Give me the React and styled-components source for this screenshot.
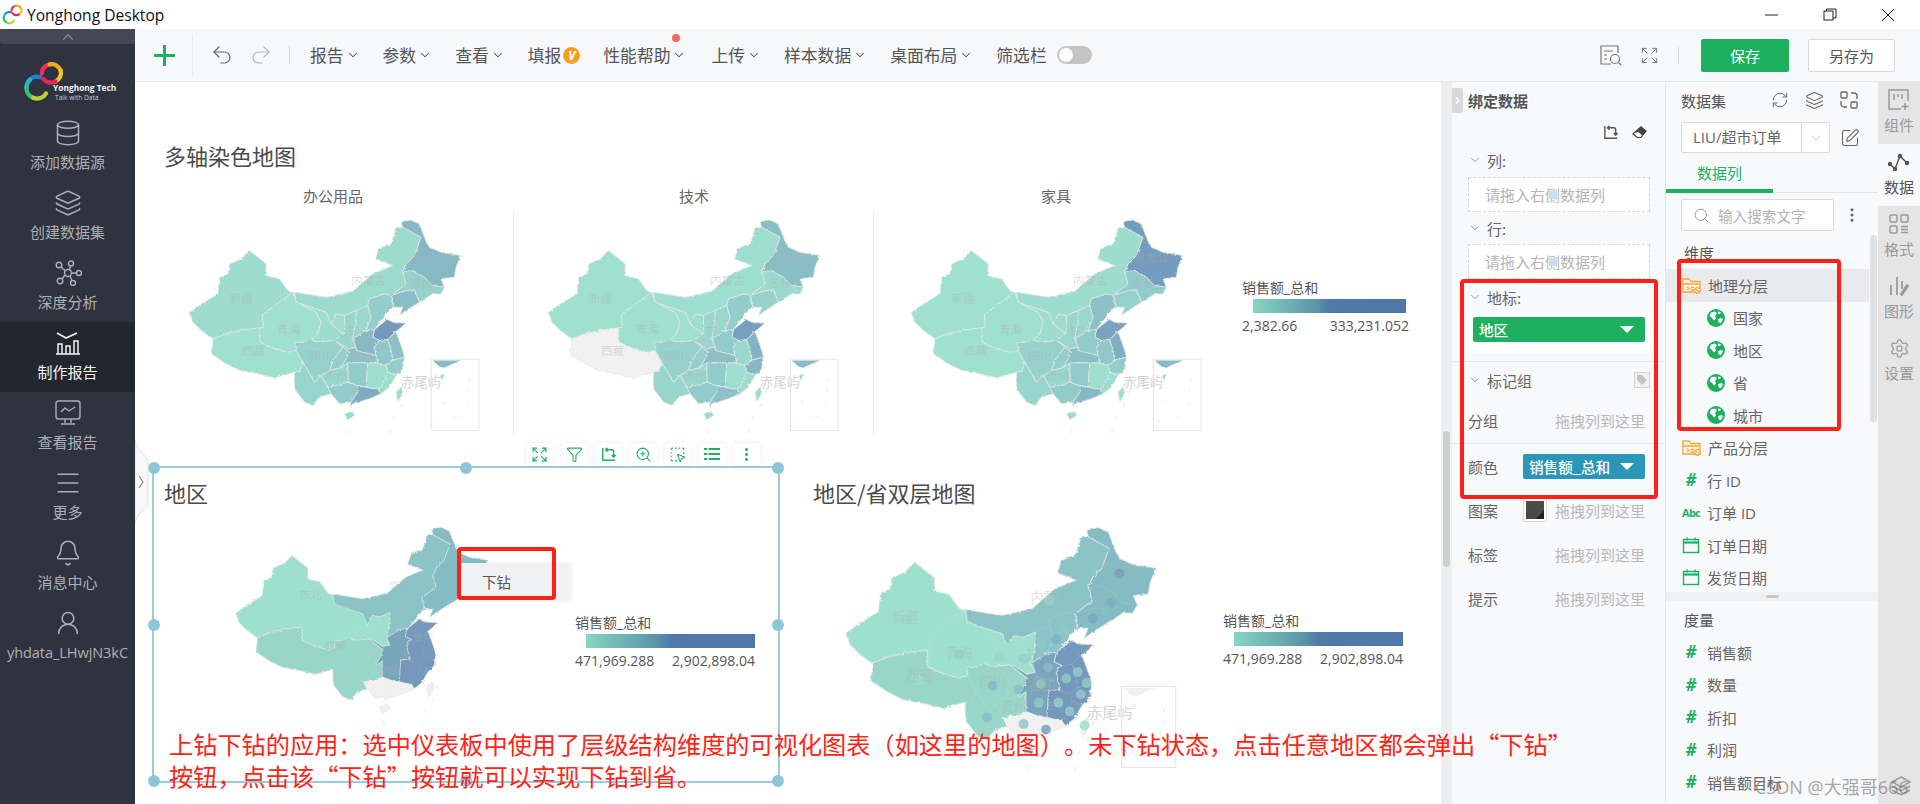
import React from "react";
import styled, { createGlobalStyle } from "styled-components";
import {
  Undo2, Redo2, ChevronDown, ChevronRight, ChevronUp, Expand, Funnel, ZoomIn, SquareDashedMousePointer,
  EllipsisVertical, RefreshCw, SquarePen, Search, Settings, Database, Layers, Menu, Bell, UserRound,
} from "lucide-react";

const CJK = `"Noto Sans CJK SC", "Open Sans", sans-serif`;
const GREEN = "#1cb05f";

const GlobalStyle = createGlobalStyle`
  html, body { margin: 0; padding: 0; background: #fff; }
  * { box-sizing: border-box; }
  #root { font-family: ${CJK}; }
`;

const Page = styled.div`
  position: relative;
  width: 1920px;
  height: 804px;
  overflow: hidden;
  display: flex;
  flex-direction: column;
`;

/* ---------- title bar ---------- */
const TitleBar = styled.div`
  height: 29px;
  flex: none;
  display: flex;
  align-items: center;
  background: #fff;
  padding-left: 2px;
`;
const AppName = styled.span`
  margin-left: 4px;
  font: 15.6px "Open Sans", sans-serif;
  color: #111;
`;
const WinButtons = styled.div`
  margin-left: auto;
  display: flex;
  align-items: center;
  gap: 44px;
  padding-right: 25px;
`;
const Body = styled.div`
  flex: 1;
  min-height: 0;
  display: flex;
`;

/* ---------- sidebar ---------- */
const Sidebar = styled.nav`
  width: 135px;
  flex: none;
  background: #2f3340;
  display: flex;
  flex-direction: column;
`;
const CollapseBar = styled.div`
  height: 15px;
  background: #454854;
  border-radius: 0 0 3px 3px;
  display: flex;
  justify-content: center;
  align-items: center;
  color: #8b8d96;
`;
const LogoBlock = styled.div`
  height: 68px;
  display: flex;
`;
const LogoText = styled.div`
  margin: 39px 0 0 -11px;
  color: #f1f1f3;
  font: 700 8.4px/10px "Open Sans", sans-serif;
  white-space: nowrap;
  small { display: block; font: 400 6.6px/9px "Open Sans", sans-serif; color: #c9cad0; margin-left: 2px; }
`;
const NavItem = styled.div`
  height: 70px;
  flex: none;
  display: flex;
  flex-direction: column;
  align-items: center;
  padding-top: 8px;
  background: ${(p) => (p.$active ? "#23252f" : "transparent")};
  color: ${(p) => (p.$active ? "#f4f4f5" : "#adafb5")};
`;
const NavIcon = styled.div`
  height: 26px;
  display: flex;
  align-items: center;
`;
const NavLabel = styled.div`
  margin-top: 6px;
  font-size: ${(p) => (p.$latin ? 14.6 : 15)}px;
  line-height: 20px;
  white-space: nowrap;
  font-family: "Open Sans", ${CJK};
  letter-spacing: ${(p) => (p.$latin ? "-0.1px" : "0")};
`;

/* ---------- toolbar ---------- */
const Column = styled.div`
  flex: 1;
  min-width: 0;
  display: flex;
  flex-direction: column;
`;
const Toolbar = styled.div`
  height: 53px;
  flex: none;
  display: flex;
  align-items: center;
  background: #f7f8fa;
  border-bottom: 1px solid #e6e8ec;
  color: #555;
`;
const PlusCell = styled.div`
  width: 58px;
  height: 43px;
  display: flex;
  align-items: center;
  padding-left: 19px;
  border-right: 1px solid #e9ebee;
`;
const HistoryGroup = styled.div`
  display: flex;
  align-items: center;
  gap: 15px;
  padding-left: 17px;
  width: 97px;
  height: 18px;
  border-right: 1px solid #d9dbde;
`;
const MenuBar = styled.div`
  display: flex;
  align-items: center;
  gap: 23px;
  margin-left: 20px;
`;
const MenuEntry = styled.div`
  position: relative;
  display: flex;
  align-items: center;
  gap: 2px;
  margin-right: ${(p) => p.$after || 0}px;
  font-size: 16.8px;
  line-height: 24px;
  white-space: nowrap;
`;
const RedDot = styled.span`
  position: absolute;
  top: -9px;
  right: 6px;
  width: 8px;
  height: 8px;
  border-radius: 50%;
  background: #ee6a5f;
`;
const VBadge = styled.span`
  width: 17px;
  height: 17px;
  border-radius: 50%;
  background: #f5a11f;
  color: #fff;
  font: italic 700 12px/17px "Open Sans", sans-serif;
  text-align: center;
`;
const Toggle = styled.span`
  position: relative;
  width: 35px;
  height: 18px;
  margin-left: 8px;
  border-radius: 9px;
  background: #c4c4c4;
  &::after {
    content: "";
    position: absolute;
    left: 2px;
    top: 2px;
    width: 14px;
    height: 14px;
    border-radius: 50%;
    background: #fff;
  }
`;
const ToolbarEnd = styled.div`
  margin-left: auto;
  display: flex;
  align-items: center;
  padding-right: 25px;
  svg + svg { margin-left: 18px; }
`;
const EndDivider = styled.span`
  width: 1px;
  height: 17px;
  margin: 0 22px 0 19px;
  background: #d9dbde;
`;
const SaveButton = styled.div`
  width: 88px;
  height: 33px;
  border-radius: 2px;
  background: ${GREEN};
  color: #fff;
  font-size: 15px;
  line-height: 33px;
  text-align: center;
`;
const SaveAsButton = styled.div`
  width: 87px;
  height: 33px;
  margin-left: 19px;
  border: 1px solid #d8dade;
  border-radius: 2px;
  background: #fff;
  color: #555;
  font-size: 15px;
  line-height: 31px;
  text-align: center;
`;

/* ---------- canvas ---------- */
const Workspace = styled.div`
  flex: 1;
  min-height: 0;
  display: flex;
`;
const Canvas = styled.main`
  position: relative;
  width: 1306px;
  flex: none;
  background: #fff;
  overflow: hidden;
  padding: 59px 0 0 17px;
`;
const WidgetTitle = styled.h2`
  margin: 0;
  padding-left: ${(p) => p.$indent || 0}px;
  font-size: 22px;
  font-weight: 400;
  line-height: 28px;
  color: #4a4a4a;
  white-space: nowrap;
`;
const MapRow = styled.div`
  display: flex;
  margin-top: 16px;
`;
const MapCell = styled.div`
  width: ${(p) => p.$w}px;
  flex: none;
`;
const CellTitle = styled.div`
  height: 22px;
  font-size: 15px;
  line-height: 22px;
  text-align: center;
  color: #666;
`;
const CellBody = styled.div`
  height: 224px;
  margin-top: 4px;
  padding: 7px 0 0 ${(p) => p.$pad}px;
  border-right: ${(p) => (p.$divider ? "1px solid #eceded" : "none")};
`;
const MapSvg = styled.svg`
  display: block;
  flex: none;
  overflow: visible;
`;
const Legend = styled.div`
  width: ${(p) => p.$w}px;
  flex: none;
  margin: ${(p) => p.$top}px 0 0 ${(p) => p.$left}px;
  font-size: 14px;
  color: #555;
  font-family: "Open Sans", ${CJK};
`;
const LegendTitle = styled.div`
  line-height: 18px;
`;
const LegendBar = styled.div`
  height: 14px;
  margin: 2px ${(p) => p.$right || 0}px 2px 11px;
  background: linear-gradient(90deg, #86d6c2 0%, #5b93a8 42%, #4f79a8 50%, #4f77a8 100%);
`;
const LegendValues = styled.div`
  display: flex;
  justify-content: space-between;
  line-height: 22px;
`;
const BottomRow = styled.div`
  display: flex;
  margin-top: 31px;
`;
const SelectedWidget = styled.section`
  position: relative;
  width: 628px;
  height: 317px;
  flex: none;
  border: 2px solid #9accd9;
  padding: 10px 0 0 10px;
`;
const PlainWidget = styled.section`
  flex: 1;
  padding: 12px 0 0 33px;
`;
const WidgetBody = styled.div`
  display: flex;
  margin-top: ${(p) => p.$top}px;
  margin-left: ${(p) => p.$left}px;
`;
const Handle = styled.span`
  position: absolute;
  left: ${(p) => p.$x}%;
  top: ${(p) => p.$y}%;
  width: 12px;
  height: 12px;
  border-radius: 50%;
  background: #8ec6d8;
  transform: translate(-50%, -50%);
`;
const WidgetTools = styled.div`
  position: absolute;
  top: -25px;
  right: 18px;
  display: flex;
  gap: 7.5px;
`;
const ToolButton = styled.div`
  width: 27px;
  height: 22px;
  border-radius: 4px;
  background: #fff;
  box-shadow: 0 0 4px rgba(0, 0, 0, 0.08);
  color: ${GREEN};
  display: flex;
  align-items: center;
  justify-content: center;
`;
const DrillMenu = styled.div`
  position: absolute;
  left: 305px;
  top: 95px;
  width: 112px;
  height: 36px;
  padding-left: 23px;
  background: #f1f2f4;
  box-shadow: 0 1px 4px rgba(0, 0, 0, 0.1);
  color: #555;
  font-size: 14.5px;
  line-height: 38px;
`;
const CanvasNotch = styled.svg`
  position: absolute;
  left: 0;
  top: 358px;
`;

const ScrollStrip = styled.div`
  position: relative;
  width: 11px;
  flex: none;
  background: #eceef0;
`;
const ScrollThumb = styled.span`
  position: absolute;
  left: 2px;
  top: 349px;
  width: 7px;
  height: 136px;
  border-radius: 4px;
  background: #cfd0d0;
`;

/* ---------- binding panel ---------- */
const BindPanel = styled.aside`
  width: 213px;
  flex: none;
  background: #f8f9fb;
  color: #555;
  font-size: 15px;
`;
const BindHead = styled.div`
  height: 36px;
  display: flex;
  align-items: center;
  gap: 5px;
  font-weight: 700;
  color: #555;
`;
const CollapseTab = styled.span`
  width: 11px;
  height: 25px;
  margin-top: 1px;
  border-radius: 0 2px 2px 0;
  background: #d9d9d9;
  color: #fff;
  display: flex;
  align-items: center;
  justify-content: center;
`;
const BindIcons = styled.div`
  height: 28px;
  display: flex;
  align-items: center;
  justify-content: flex-end;
  gap: 13px;
  padding-right: 18px;
  color: #555;
`;
const SectionHead = styled.div`
  height: 28px;
  margin-top: ${(p) => p.$top || 0}px;
  display: flex;
  align-items: center;
  gap: 5px;
  padding: 0 15px 0 16px;
  color: #666;
  svg { color: #888; }
`;
const TagMark = styled.svg`
  margin-left: auto;
`;
const DropBox = styled.div`
  height: 35px;
  margin: ${(p) => p.$top}px 15px 0 16px;
  border: 1px dashed #d5d6d8;
  background: #fff;
  padding-left: 16px;
  line-height: 33px;
  color: #b5b5b5;
`;
const PillBox = styled.div`
  height: 41px;
  margin: 1px 15px 0 16px;
  padding: 5px;
  background: #fff;
`;
const FieldPill = styled.div`
  height: 25px;
  flex: ${(p) => (p.$grow ? "0 0 122px" : "none")};
  margin-left: ${(p) => (p.$grow ? "auto" : "0")};
  padding: 0 11px 0 6px;
  border-radius: 2px;
  background: ${(p) => p.$bg};
  color: #fff;
  display: flex;
  align-items: center;
  justify-content: space-between;
  font-size: 14.6px;
  font-weight: 500;
  white-space: nowrap;
`;
const Caret = styled.span`
  width: 0;
  height: 0;
  border-left: 7px solid transparent;
  border-right: 7px solid transparent;
  border-top: 7px solid #fff;
`;
const PanelRule = styled.div`
  height: 0;
  border-top: 1px solid #e6e7e9;
  margin-top: ${(p) => p.$top || 0}px;
`;
const FieldRow = styled.div`
  height: ${(p) => (p.$rule ? 46 : 44)}px;
  margin-top: ${(p) => (p.$rule ? 4 : 0)}px;
  display: flex;
  align-items: center;
  padding: 0 20px 0 16px;
  border-bottom: ${(p) => (p.$rule ? "1px solid #e6e7e9" : "none")};
  color: #666;
`;
const DragHint = styled.span`
  margin-left: auto;
  color: #b8b8b8;
  white-space: nowrap;
`;
const PatternSwatch = styled.span`
  width: 24px;
  height: 24px;
  margin-left: 25px;
  border: 1px solid #d8d8d8;
  border-radius: 2px;
  padding: 2px;
  background: #fff;
  &::after {
    content: "";
    display: block;
    width: 100%;
    height: 100%;
    background: linear-gradient(135deg, #4a4a4a 75%, #222 75%);
  }
`;

/* ---------- data panel ---------- */
const DataPanel = styled.aside`
  position: relative;
  width: 213px;
  flex: none;
  background: #f8f9fb;
  border-left: 1px solid #e6e7e9;
  color: #555;
  font-size: 15px;
`;
const DataHead = styled.div`
  height: 36px;
  display: flex;
  align-items: center;
  padding: 0 20px 0 15px;
  span { margin-right: auto; }
  svg { margin-left: 16px; color: #666; }
`;
const SourceRow = styled.div`
  margin: 4px 0 0 15px;
  display: flex;
  align-items: center;
  gap: 10px;
  color: #666;
`;
const SourceSelect = styled.div`
  width: 149px;
  height: 31px;
  display: flex;
  border: 1px solid #d8dade;
  border-radius: 2px;
  background: #fff;
  line-height: 29px;
`;
const SourceName = styled.span`
  flex: 1;
  padding-left: 11px;
  font-family: "Open Sans", ${CJK};
  color: #666;
  white-space: nowrap;
`;
const SourceArrow = styled.span`
  width: 28px;
  border-left: 1px solid #d8dade;
  display: flex;
  align-items: center;
  justify-content: center;
  color: #c8c8c8;
`;
const TabRow = styled.div`
  height: 40px;
  border-bottom: 1px solid #e3e4e6;
`;
const DataTab = styled.div`
  width: 107px;
  height: 40px;
  padding-left: 31px;
  border-bottom: 4px solid ${GREEN};
  color: ${GREEN};
  line-height: 40px;
`;
const SearchRow = styled.div`
  margin: 6px 0 0 15px;
  display: flex;
  align-items: center;
  gap: 9px;
  color: #666;
`;
const SearchBox = styled.div`
  width: 153px;
  height: 32px;
  display: flex;
  align-items: center;
  gap: 8px;
  padding-left: 11px;
  border: 1px solid #d8dade;
  border-radius: 2px;
  background: #fff;
  color: #b3b3b3;
  font-size: 14.6px;
  svg { color: #999; }
`;
const GroupLabel = styled.div`
  height: 22px;
  margin-top: ${(p) => p.$top}px;
  padding-left: 18px;
  line-height: 22px;
  color: #555;
`;
const FieldList = styled.div`
  margin-top: ${(p) => p.$top}px;
  height: ${(p) => p.$h}px;
  overflow: hidden;
`;
const FieldItem = styled.div`
  height: 32.5px;
  margin-right: 9px;
  display: flex;
  align-items: center;
  gap: ${(p) => (p.$child ? 8 : 7)}px;
  padding-left: ${(p) => (p.$child ? 41 : 16)}px;
  background: ${(p) => (p.$active ? "#e9eaeb" : "transparent")};
  font-family: "Open Sans", ${CJK};
  color: #666;
  white-space: nowrap;
`;
const TypeMark = styled.span`
  width: 18px;
  flex: none;
  text-align: center;
  color: ${GREEN};
  font: ${(p) => (p.$size ? "" : "italic")} 700 ${(p) => p.$size || 17}px/18px "Open Sans", sans-serif;
  letter-spacing: ${(p) => (p.$size ? "-0.8px" : 0)};
`;
const ListThumb = styled.span`
  position: absolute;
  right: 1px;
  top: 153px;
  width: 7px;
  height: 187px;
  border-radius: 4px;
  background: #e0e1e3;
`;
const SplitBand = styled.div`
  height: 9px;
  background: #f0f1f3;
  display: flex;
  align-items: center;
  justify-content: center;
  &::after {
    content: "";
    width: 13px;
    height: 3px;
    border-radius: 2px;
    background: #c9c9c9;
  }
`;

/* ---------- tab rail ---------- */
const TabRail = styled.aside`
  width: 42px;
  flex: none;
  background: #e5e5e6;
`;
const RailTab = styled.div`
  height: 62px;
  padding-top: 7px;
  display: flex;
  flex-direction: column;
  align-items: center;
  background: ${(p) => (p.$active ? "#f8f9fb" : "transparent")};
  color: ${(p) => (p.$active ? "#555" : "#999")};
`;
const RailIcon = styled.div`
  height: 22px;
  display: flex;
  align-items: center;
`;
const RailLabel = styled.div`
  margin-top: 4px;
  font-size: 15px;
  line-height: 20px;
`;

/* ---------- overlays ---------- */
const RedBox = styled.div`
  position: absolute;
  left: ${(p) => p.$l}px;
  top: ${(p) => p.$t}px;
  width: ${(p) => p.$w}px;
  height: ${(p) => p.$h}px;
  border: 4px solid #ff2018;
  border-radius: 4px;
  pointer-events: none;
`;
const Annotation = styled.div`
  position: absolute;
  left: 169px;
  top: 728px;
  color: #ff2418;
  font-size: 24.2px;
  line-height: 32px;
  white-space: nowrap;
  text-spacing-trim: space-all;
`;
const Watermark = styled.div`
  position: absolute;
  left: 1755px;
  top: 773px;
  display: flex;
  align-items: center;
  color: rgba(110, 110, 110, 0.62);
  font: 18px "Open Sans", ${CJK};
  white-space: nowrap;
  svg { margin-left: -20px; }
`;

/* ---------- map data, coordinates in one shared map space ---------- */
const PROVINCES = {
  XJ: "150,545 185,520 235,490 240,440 265,430 270,400 305,385 330,360 355,380 380,400 378,435 420,445 445,480 460,485 405,525 368,553 372,590 360,592 310,598 260,610 220,625 185,600 160,575",
  XZ: "220,625 260,610 310,598 360,592 362,635 395,650 440,665 470,660 490,695 480,725 465,725 405,742 355,730 300,720 260,700 215,670",
  QH: "368,553 405,525 460,485 480,520 530,545 545,575 535,610 515,628 470,640 470,660 440,665 395,650 362,635 360,592 372,590",
  GS: "460,485 470,515 500,525 560,545 575,580 612,610 585,630 540,635 515,628 535,610 545,575 530,545 480,520",
  NX: "575,580 590,550 615,555 615,610 612,610",
  NM: "465,485 560,500 640,482 700,430 760,405 708,385 720,350 755,340 770,295 790,290 845,320 825,375 800,400 790,425 800,460 755,495 735,490 690,505 685,525 650,540 615,555 590,550 575,580 560,545 500,525 470,515",
  HLJ: "785,272 815,268 840,280 855,320 870,350 905,365 965,375 950,410 945,440 905,445 915,470 880,465 855,440 820,420 790,425 800,400 825,375 845,320 790,290",
  JL: "790,425 820,420 855,440 880,465 915,470 905,490 880,490 840,515 825,478 800,480 755,495 800,460",
  LN: "755,495 800,480 825,478 840,515 800,540 780,555 790,530 760,530",
  SN: "615,555 650,540 650,570 640,625 650,650 625,655 585,630 612,610 615,610",
  SX: "650,540 685,525 695,560 680,600 640,625 650,570",
  HE: "690,505 735,490 755,495 760,530 740,550 725,570 705,597 680,600 695,560 685,525",
  SD: "705,597 745,565 760,575 800,578 770,603 745,627 720,630 700,620",
  HA: "640,625 680,600 705,597 700,620 720,630 705,650 710,675 650,660 650,650",
  AH: "720,630 745,627 755,660 760,690 740,705 715,698 710,675 705,650",
  JS: "745,627 770,603 790,660 795,680 755,690 760,690 755,660",
  ZJ: "755,690 795,680 790,715 770,735 745,725 740,705 760,690",
  HB: "585,630 625,655 650,650 650,660 710,675 715,698 685,697 625,697 605,712 630,665 610,650",
  CQ: "570,720 580,690 610,650 630,665 605,712",
  SC: "470,640 515,628 540,635 585,630 610,650 580,690 570,720 545,735 525,755 490,695 470,660",
  HN: "625,697 685,697 680,770 660,768 625,755",
  JX: "685,697 715,698 740,705 745,725 725,770 715,775 700,775 680,770",
  FJ: "745,725 770,735 750,770 725,790 715,775 725,770",
  GZ: "570,720 605,712 625,697 625,755 590,765 565,770 550,745 545,735",
  YN: "480,725 490,695 525,755 545,735 550,745 565,770 575,790 540,800 520,825 495,815 465,775 465,725",
  GX: "575,790 565,770 590,765 625,755 660,768 655,785 635,815 600,820",
  GD: "655,785 660,768 680,770 700,775 715,775 725,790 690,805 640,820 632,828 635,815",
  HI: "615,850 640,843 645,855 625,868",
  TW: "770,785 785,770 790,785 775,815",
};

const REGIONS = [
  { ids: ["XJ", "QH", "GS", "NX", "SN"], fill: "#9ee0ce" },
  { ids: ["XZ", "SC", "CQ", "GZ", "YN"], fill: "#99d6ca" },
  { ids: ["NM", "SX", "HE"], fill: "#8bc3c6" },
  { ids: ["HLJ", "JL", "LN"], fill: "#83bcc2" },
  { ids: ["HA", "HB", "HN"], fill: "#7aa6bb" },
  { ids: ["SD", "JS", "AH", "ZJ", "JX", "FJ"], fill: "#7598bb" },
  { ids: ["GD", "GX", "HI", "TW"], fill: "#f0f0f0" },
];

const SALES_OFFICE = { XJ: 0.2, XZ: 0, QH: 0.06, GS: 0.2, NX: 0.15, NM: 0.24, HLJ: 0.72, JL: 0.42, LN: 0.66, SN: 0.32, SX: 0.3, HE: 0.46, SD: 1, HA: 0.72, AH: 0.55, JS: 0.62, ZJ: 0.46, HB: 0.62, CQ: 0.45, SC: 0.42, HN: 0.5, JX: 0.12, FJ: 0.2, GZ: 0.3, YN: 0.36, GX: 0.5, GD: 0.85, HI: 0.25, TW: 0.2 };
const SALES_TECH = { ...SALES_OFFICE, XJ: 0.02, XZ: null, QH: 0.02, GS: 0.05, NM: 0.14, HLJ: 0.66, JL: 0.28, LN: 0.4, SD: 0.95, JS: 0.78, HA: 0.5, GD: 0.62, ZJ: 0.72, AH: 0.3 };
const SALES_FURNITURE = { ...SALES_OFFICE, XJ: 0.06, XZ: 0.03, NM: 0.18, HLJ: 0.98, JL: 0.5, LN: 0.42, SD: 0.92, JS: 0.82, HA: 0.5, GD: 0.72, HE: 0.62 };

const tint = (t) => {
  if (t === null) return "#f1f1f1";
  const low = [159, 224, 207];
  const high = [115, 153, 189];
  const k = Math.pow(t, 1.8);
  return `rgb(${low.map((c, i) => Math.round(c + (high[i] - c) * k)).join(",")})`;
};

const PROVINCE_LABELS = [
  ["新疆", 305, 517], ["青海", 447, 610], ["西藏", 342, 672], ["四川", 535, 688],
  ["内蒙古", 687, 463], ["黑龙江", 870, 393], ["吉林", 845, 470], ["贵州", 590, 750], ["湖北", 665, 690], ["甘", 640, 614],
];
const REGION_LABELS = [["西北", 390, 500], ["华北", 680, 465], ["西南", 470, 660], ["华东", 755, 640], ["华南", 650, 745]];
const DOTS = [
  [870, 387, 1], [848, 465, 0.85], [800, 507, 0.9], [719, 530, 0.6], [727, 542, 0.55], [703, 562, 0.8], [663, 574, 0.55],
  [685, 458, 0.3], [305, 510, 0.25], [447, 601, 0.45], [553, 608, 0.35], [581, 580, 0.15], [617, 613, 0.45], [342, 669, 0],
  [536, 684, 0.75], [604, 694, 0.7], [592, 742, 0.4], [520, 768, 0.7], [617, 785, 0.6], [676, 800, 1], [629, 855, 0.3], [778, 789, 0.2],
  [741, 593, 1], [681, 636, 0.7], [760, 648, 0.5], [730, 665, 0.5], [663, 679, 0.5], [784, 677, 0.45], [768, 707, 0.5], [658, 729, 0.5], [709, 729, 0.4], [739, 752, 0.45],
];

const NINE_DASH = ["625,896 632,908", "752,898 752,908", "760,868 766,856", "784,830 790,820", "800,790 802,778"];

const ChinaMap = ({ width, values, grouped, labels, dots, inset = true, provinceLines }) => (
  <MapSvg width={width} height={width * 0.75} viewBox="145 262 880 660">
    <defs>
      <filter id="rough" x="-5%" y="-5%" width="110%" height="110%">
        <feTurbulence type="fractalNoise" baseFrequency="0.09" numOctaves="2" seed="4" />
        <feDisplacementMap in="SourceGraphic" scale="9" />
      </filter>
    </defs>
    <g filter="url(#rough)">
      {grouped
        ? grouped.map((region) => (
            <g key={region.fill}>
              <g fill="#e6e8e8" stroke="#e6e8e8" strokeWidth="6">
                {region.ids.map((id) => <polygon key={id} points={PROVINCES[id]} />)}
              </g>
              <g fill={region.fill} stroke={region.fill} strokeWidth="1.5">
                {region.ids.map((id) => <polygon key={id} points={PROVINCES[id]} />)}
              </g>
              {provinceLines && (
                <g fill="none" stroke="rgba(255,255,255,.07)" strokeWidth="2">
                  {region.ids.map((id) => <polygon key={id} points={PROVINCES[id]} />)}
                </g>
              )}
            </g>
          ))
        : Object.keys(PROVINCES).map((id) => (
            <polygon key={id} points={PROVINCES[id]} fill={tint(values[id])} stroke="#e2e6e6" strokeWidth="2.5" />
          ))}
    </g>
    {dots && dots.map(([x, y, t]) => <circle key={`${x}-${y}`} cx={x} cy={y} r="13" fill={tint(t)} opacity="0.8" />)}
    <g fill="rgba(170,175,175,.4)" fontSize="35">
      {labels.map(([text, x, y]) => <text key={text} x={x} y={y} textAnchor="middle">{text}</text>)}
    </g>
    <g stroke="#dfdfdf" strokeWidth="2.5" fill="none">
      {NINE_DASH.map((p) => <polyline key={p} points={p} />)}
    </g>
    {inset && (
      <>
        <text x="845" y="770" textAnchor="middle" fontSize="40" fill="#d3d3d3">赤尾屿</text>
        <rect x="876" y="686" width="143" height="214" fill="none" stroke="#e6e6e6" strokeWidth="3" />
        <polygon points="880,690 965,690 935,702 915,712 900,708" fill={grouped ? "#f0f0f0" : tint(0.7)} />
        <polygon points="902,735 916,730 908,750" fill={grouped ? "#f0f0f0" : tint(0.15)} />
        <g stroke="#e4e4e4" strokeWidth="2.5" fill="none">
          <polyline points="992,742 986,755" />
          <polyline points="985,775 985,785" />
          <polyline points="912,812 912,822" />
          <polyline points="984,818 981,828" />
          <polyline points="945,858 948,862" />
          <polyline points="955,860 960,856" />
          <polyline points="895,868 893,876" />
        </g>
      </>
    )}
  </MapSvg>
);

/* ---------- small drawings ---------- */
const Rings = ({ size, className }) => (
  <svg className={className} width={size} height={size} viewBox="0 0 48 48">
    <g fill="none" strokeWidth="5" strokeLinecap="round">
      <path d="M8 22a11.500 11.500 0 0 1 12 -3" stroke="#1f7fd0" />
      <path d="M4 31a12 12 0 0 1 4 -9" stroke="#2bb7c4" />
      <path d="M4 31a12 12 0 0 0 8 12" stroke="#38c06f" />
      <path d="M12 43a12 12 0 0 0 15 -5" stroke="#b7d334" />
      <path d="M22 15a11 11 0 0 1 9 -11" stroke="#ef2d56" />
      <path d="M31 4a11 11 0 0 1 13 7" stroke="#f5a623" />
      <path d="M44 11a11 11 0 0 1 -6 13" stroke="#f5c623" />
      <path d="M38 24a11 11 0 0 1 -14 -3" stroke="#e8264f" />
    </g>
  </svg>
);
const SidebarRings = styled(Rings)`
  margin: 17px 0 0 23px;
  flex: none;
`;

const Folder = () => (
  <svg width="19" height="17" viewBox="0 0 19 17" fill="none" stroke="#f4a83c" strokeWidth="1.3">
    <path d="M1 15V2h6l2 2.500h9V15H1z" fill="#fdf3e3" />
    <path d="M1 7h17M5 10l2.500 1.500L5 13M9 10.500h3M9 13h3" />
    <circle cx="15.500" cy="13.500" r="2.800" fill="#fff" />
    <path d="M14 12l3 3" />
  </svg>
);
const Globe = () => (
  <svg width="18" height="18" viewBox="0 0 18 18">
    <circle cx="9" cy="9" r="9" fill={GREEN} />
    <path d="M4 3.500 L8 2.500 L10 4.500 L8 7 L9 9.500 L7 11.500 L5 9 L2.500 7z M11 2.200 L14 3.500 L13 5 L11 4.500z M11 10 L15 9 L16 10.500 L13.500 14.500 L11.500 13z" fill="#fff" />
  </svg>
);
const Calendar = () => (
  <svg width="18" height="17" viewBox="0 0 18 17" fill="none" stroke={GREEN} strokeWidth="1.400">
    <rect x="1.500" y="2.500" width="15" height="13" />
    <path d="M1.500 5.500h15" strokeWidth="2.200" />
    <path d="M5 .500v3M13 .500v3" />
  </svg>
);
const SwapAxes = ({ size = 18 }) => (
  <svg width={size} height={size} viewBox="0 0 18 18" fill="none" stroke="currentColor" strokeWidth="1.500">
    <path d="M3 2v13h13" />
    <path d="M7 4h5.500a2 2 0 0 1 2 2v5M5.500 4 8 2M5.500 4 8 6M12.500 9.500l2 2.300 2-2.300" />
  </svg>
);
const PanelChevron = () => <ChevronDown size={14} strokeWidth={1.400} />;
const MenuChevron = () => <ChevronDown size={14} strokeWidth={1.800} />;

const handles = [[0, 0], [50, 0], [100, 0], [0, 50], [100, 50], [0, 100], [50, 100], [100, 100]];

const NOTE_FIRST = "上钻下钻的应用\uFF1A选中仪表板中使用了层级结构维度的可视化图表\uFF08如这里的地图\uFF09\u3002未下钻状态\uFF0C点击任意地区都会弹出\u201C下钻\u201D";
const NOTE_SECOND = "按钮\uFF0C点击该\u201C下钻\u201D按钮就可以实现下钻到省\u3002";

const App = () => (
  <Page>
    <GlobalStyle />
    <TitleBar>
      <Rings size={21} />
      <AppName>Yonghong Desktop</AppName>
      <WinButtons>
        <svg width="14" height="14" viewBox="0 0 14 14" stroke="#222" fill="none"><path d="M0 7h13" /></svg>
        <svg width="14" height="14" viewBox="0 0 14 14" stroke="#222" fill="none"><rect x="1" y="3" width="9" height="9" /><path d="M3.500 3V1H13v9h-3" /></svg>
        <svg width="14" height="14" viewBox="0 0 14 14" stroke="#222" fill="none"><path d="M1 1l12 12M13 1L1 13" /></svg>
      </WinButtons>
    </TitleBar>
    <Body>
      <Sidebar>
        <CollapseBar><ChevronUp size={18} strokeWidth={1.500} /></CollapseBar>
        <LogoBlock>
          <SidebarRings size={41} />
          <LogoText>Yonghong Tech<small>Talk with Data</small></LogoText>
        </LogoBlock>
        <NavItem><NavIcon><Database size={28} strokeWidth={1.300} /></NavIcon><NavLabel>添加数据源</NavLabel></NavItem>
        <NavItem><NavIcon><Layers size={28} strokeWidth={1.300} /></NavIcon><NavLabel>创建数据集</NavLabel></NavItem>
        <NavItem>
          <NavIcon>
            <svg width="28" height="26" viewBox="0 0 28 26" fill="none" stroke="currentColor" strokeWidth="1.400">
              <circle cx="14" cy="13" r="3.500" /><circle cx="5" cy="5" r="2.800" /><circle cx="17" cy="3.500" r="2.500" /><circle cx="25" cy="13" r="2.500" /><circle cx="6" cy="21" r="2.800" /><circle cx="19" cy="23" r="2.500" />
              <path d="M7 7l4.500 4M15.500 9.500l1-3.500M17.500 13h5M11 15l-3 4M16 16l2 4.500" />
            </svg>
          </NavIcon>
          <NavLabel>深度分析</NavLabel>
        </NavItem>
        <NavItem $active>
          <NavIcon>
            <svg width="28" height="26" viewBox="0 0 28 26" fill="none" stroke="currentColor" strokeWidth="1.500">
              <path d="M2 24h24M4 24V14h4v10M12 24V16h4v8M20 24V11h4v13" />
              <path d="M3 3l9 5 11-5" strokeWidth="1.800" />
            </svg>
          </NavIcon>
          <NavLabel>制作报告</NavLabel>
        </NavItem>
        <NavItem>
          <NavIcon>
            <svg width="28" height="26" viewBox="0 0 28 26" fill="none" stroke="currentColor" strokeWidth="1.400">
              <rect x="2" y="1" width="24" height="18" rx="2.500" />
              <path d="M7 12l4-4 4 3 6-4M11 19v4M17 19v4M7 24h14" />
            </svg>
          </NavIcon>
          <NavLabel>查看报告</NavLabel>
        </NavItem>
        <NavItem><NavIcon><Menu size={30} strokeWidth={1.200} /></NavIcon><NavLabel>更多</NavLabel></NavItem>
        <NavItem><NavIcon><Bell size={28} strokeWidth={1.300} /></NavIcon><NavLabel>消息中心</NavLabel></NavItem>
        <NavItem><NavIcon><UserRound size={28} strokeWidth={1.300} /></NavIcon><NavLabel $latin>yhdata_LHwjN3kC</NavLabel></NavItem>
      </Sidebar>

      <Column>
        <Toolbar>
          <PlusCell>
            <svg width="21" height="21" viewBox="0 0 21 21" fill={GREEN}><path d="M9 0h3v9h9v3h-9v9H9v-9H0V9h9z" /></svg>
          </PlusCell>
          <HistoryGroup>
            <Undo2 size={24} strokeWidth={1.200} color="#666" />
            <Redo2 size={24} strokeWidth={1.200} color="#b8b8b8" />
          </HistoryGroup>
          <MenuBar>
            <MenuEntry>报告<MenuChevron /></MenuEntry>
            <MenuEntry>参数<MenuChevron /></MenuEntry>
            <MenuEntry>查看<MenuChevron /></MenuEntry>
            <MenuEntry>填报<VBadge>V</VBadge></MenuEntry>
            <MenuEntry $after={2}>性能帮助<RedDot /><MenuChevron /></MenuEntry>
            <MenuEntry>上传<MenuChevron /></MenuEntry>
            <MenuEntry>样本数据<MenuChevron /></MenuEntry>
            <MenuEntry>桌面布局<MenuChevron /></MenuEntry>
            <MenuEntry>筛选栏<Toggle /></MenuEntry>
          </MenuBar>
          <ToolbarEnd>
            <svg width="22" height="21" viewBox="0 0 22 21" fill="none" stroke="#777" strokeWidth="1.200">
              <path d="M18 8V1H1v18h10M4 6h9M4 10h3M4 14h3" />
              <circle cx="15" cy="14" r="4.500" /><path d="M18.500 17.500l2.500 2.500" />
            </svg>
            <Expand size={19} strokeWidth={1.200} color="#777" />
            <EndDivider />
            <SaveButton>保存</SaveButton>
            <SaveAsButton>另存为</SaveAsButton>
          </ToolbarEnd>
        </Toolbar>

        <Workspace>
          <Canvas>
            <WidgetTitle $indent={12}>多轴染色地图</WidgetTitle>
            <MapRow>
              <MapCell $w={362}>
                <CellTitle>办公用品</CellTitle>
                <CellBody $pad={36} $divider><ChinaMap width={293} values={SALES_OFFICE} labels={PROVINCE_LABELS} /></CellBody>
              </MapCell>
              <MapCell $w={360}>
                <CellTitle>技术</CellTitle>
                <CellBody $pad={33} $divider><ChinaMap width={293} values={SALES_TECH} labels={PROVINCE_LABELS} /></CellBody>
              </MapCell>
              <MapCell $w={364}>
                <CellTitle>家具</CellTitle>
                <CellBody $pad={36}><ChinaMap width={293} values={SALES_FURNITURE} labels={PROVINCE_LABELS} /></CellBody>
              </MapCell>
              <Legend $w={167} $top={94} $left={4}>
                <LegendTitle>销售额_总和</LegendTitle>
                <LegendBar $right={3} />
                <LegendValues><span>2,382.66</span><span>333,231.052</span></LegendValues>
              </Legend>
            </MapRow>

            <BottomRow>
              <SelectedWidget>
                {handles.map(([x, y]) => <Handle key={`${x}-${y}`} $x={x} $y={y} />)}
                <WidgetTools>
                  <ToolButton><Expand size={17} strokeWidth={1.700} /></ToolButton>
                  <ToolButton><Funnel size={17} strokeWidth={1.500} /></ToolButton>
                  <ToolButton><SwapAxes size={17} /></ToolButton>
                  <ToolButton><ZoomIn size={17} strokeWidth={1.500} /></ToolButton>
                  <ToolButton><SquareDashedMousePointer size={17} strokeWidth={1.500} /></ToolButton>
                  <ToolButton>
                    <svg width="16" height="14" viewBox="0 0 16 14" stroke="currentColor" strokeWidth="2" strokeDasharray="3 1.500 12 0"><path d="M0 2h16M0 7h16M0 12h16" /></svg>
                  </ToolButton>
                  <ToolButton><EllipsisVertical size={17} strokeWidth={2.200} /></ToolButton>
                </WidgetTools>
                <WidgetTitle>地区</WidgetTitle>
                <WidgetBody $top={20} $left={71}>
                  <ChinaMap width={271} grouped={REGIONS} labels={REGION_LABELS} inset={false} />
                  <Legend $w={180} $top={88} $left={69}>
                    <LegendTitle>销售额_总和</LegendTitle>
                    <LegendBar />
                    <LegendValues><span>471,969.288</span><span>2,902,898.04</span></LegendValues>
                  </Legend>
                </WidgetBody>
                <DrillMenu>下钻</DrillMenu>
              </SelectedWidget>
              <PlainWidget>
                <WidgetTitle>地区/省双层地图</WidgetTitle>
                <WidgetBody $top={20} $left={32}>
                  <ChinaMap width={333} grouped={REGIONS} labels={PROVINCE_LABELS} dots={DOTS} provinceLines />
                  <Legend $w={180} $top={86} $left={45}>
                    <LegendTitle>销售额_总和</LegendTitle>
                    <LegendBar />
                    <LegendValues><span>471,969.288</span><span>2,902,898.04</span></LegendValues>
                  </Legend>
                </WidgetBody>
              </PlainWidget>
            </BottomRow>

            <CanvasNotch width="14" height="84" viewBox="0 0 14 84" fill="#f7f8fa" stroke="#dfe1e5">
              <path d="M0 0c2 14 13 12 13 24v36c0 12-11 10-13 24z" />
              <path d="M4 36l4 6-4 6" fill="none" stroke="#8a8a8a" strokeWidth="1.200" />
            </CanvasNotch>
          </Canvas>

          <ScrollStrip><ScrollThumb /></ScrollStrip>

          <BindPanel>
            <BindHead><CollapseTab><ChevronRight size={13} strokeWidth={2.500} /></CollapseTab>绑定数据</BindHead>
            <BindIcons>
              <SwapAxes size={17} />
              <svg width="15" height="13" viewBox="0 0 15 13" fill="#444"><path d="M9 0l6 5-6 7H5L0 8z" /><path d="M1.800 7.500 5.500 11h3l1.500-1.700-4-3.500z" fill="#fff" /></svg>
            </BindIcons>
            <SectionHead><PanelChevron />列:</SectionHead>
            <DropBox $top={3}>请拖入右侧数据列</DropBox>
            <SectionHead $top={2}><PanelChevron />行:</SectionHead>
            <DropBox $top={2}>请拖入右侧数据列</DropBox>
            <SectionHead $top={4}><PanelChevron />地标:</SectionHead>
            <PillBox><FieldPill $bg={GREEN}>地区<Caret /></FieldPill></PillBox>
            <PanelRule $top={8} />
            <SectionHead $top={4}>
              <PanelChevron />标记组
              <TagMark width="16" height="16" viewBox="0 0 16 16"><rect x=".5" y=".5" width="15" height="15" fill="#f1f1f1" stroke="#d5d5d5" /><path d="M3 3h5l5 5-5 5-5-5z" fill="#c4c4c4" /></TagMark>
            </SectionHead>
            <FieldRow $rule>分组<DragHint>拖拽列到这里</DragHint></FieldRow>
            <FieldRow>颜色<FieldPill $bg="#2b97b8" $grow>销售额_总和<Caret /></FieldPill></FieldRow>
            <FieldRow>图案<PatternSwatch /><DragHint>拖拽列到这里</DragHint></FieldRow>
            <FieldRow>标签<DragHint>拖拽列到这里</DragHint></FieldRow>
            <FieldRow>提示<DragHint>拖拽列到这里</DragHint></FieldRow>
          </BindPanel>

          <DataPanel>
            <DataHead>
              <span>数据集</span>
              <RefreshCw size={18} strokeWidth={1.300} />
              <Layers size={19} strokeWidth={1.300} />
              <svg width="18" height="18" viewBox="0 0 18 18" fill="none" stroke="currentColor" strokeWidth="1.300">
                <rect x="1" y="1" width="6" height="6" rx="1" /><rect x="11" y="11" width="6" height="6" rx="1" />
                <path d="M11 2h3a3 3 0 0 1 3 3v3M7 16H4a3 3 0 0 1-3-3v-3" />
              </svg>
            </DataHead>
            <SourceRow>
              <SourceSelect>
                <SourceName>LIU/超市订单</SourceName>
                <SourceArrow><ChevronDown size={16} strokeWidth={1.500} /></SourceArrow>
              </SourceSelect>
              <SquarePen size={20} strokeWidth={1.300} />
            </SourceRow>
            <TabRow><DataTab>数据列</DataTab></TabRow>
            <SearchRow>
              <SearchBox><Search size={17} strokeWidth={1.300} />输入搜索文字</SearchBox>
              <EllipsisVertical size={18} strokeWidth={2} />
            </SearchRow>
            <GroupLabel $top={11}>维度</GroupLabel>
            <FieldList $top={5} $h={323}>
              <FieldItem $active><Folder />地理分层</FieldItem>
              {["国家", "地区", "省", "城市"].map((name) => <FieldItem key={name} $child><Globe />{name}</FieldItem>)}
              <FieldItem><Folder />产品分层</FieldItem>
              <FieldItem><TypeMark>#</TypeMark>行 ID</FieldItem>
              <FieldItem><TypeMark $size={11}>Abc</TypeMark>订单 ID</FieldItem>
              <FieldItem><Calendar />订单日期</FieldItem>
              <FieldItem><Calendar />发货日期</FieldItem>
            </FieldList>
            <ListThumb />
            <SplitBand />
            <GroupLabel $top={8}>度量</GroupLabel>
            <FieldList $top={5} $h={170}>
              {["销售额", "数量", "折扣", "利润", "销售额目标"].map((name) => <FieldItem key={name}><TypeMark>#</TypeMark>{name}</FieldItem>)}
            </FieldList>
          </DataPanel>

          <TabRail>
            <RailTab>
              <RailIcon>
                <svg width="22" height="22" viewBox="0 0 22 22" fill="none" stroke="currentColor" strokeWidth="1.500"><path d="M13 20H1V1h19v11" /><path d="M6 5v6M10 5v3M14 5v5M17 14v7M13.500 17.500h7" /></svg>
              </RailIcon>
              <RailLabel>组件</RailLabel>
            </RailTab>
            <RailTab $active>
              <RailIcon>
                <svg width="22" height="18" viewBox="0 0 22 18" fill="none" stroke="currentColor" strokeWidth="1.500"><path d="M2 11l5 5 5-13 7 7" /><circle cx="2" cy="11" r="1.500" fill="currentColor" /><circle cx="7" cy="16" r="1.500" fill="currentColor" /><circle cx="12" cy="3" r="1.500" fill="currentColor" /><circle cx="19" cy="10" r="1.500" fill="currentColor" /></svg>
              </RailIcon>
              <RailLabel>数据</RailLabel>
            </RailTab>
            <RailTab>
              <RailIcon>
                <svg width="20" height="20" viewBox="0 0 20 20" fill="none" stroke="currentColor" strokeWidth="1.500"><rect x="1" y="1" width="7" height="7" rx="1" /><rect x="12" y="1" width="7" height="7" rx="1" /><rect x="1" y="12" width="7" height="7" rx="1" /><path d="M12 12.500h7M12 15.500h7M12 18.500h7" /></svg>
              </RailIcon>
              <RailLabel>格式</RailLabel>
            </RailTab>
            <RailTab>
              <RailIcon>
                <svg width="22" height="22" viewBox="0 0 22 22" fill="none" stroke="currentColor" strokeWidth="1.800"><path d="M3 10v10M9 2v18M14 6v8M20 11l-6 9-1-1 6-9z" /></svg>
              </RailIcon>
              <RailLabel>图形</RailLabel>
            </RailTab>
            <RailTab>
              <RailIcon><Settings size={21} strokeWidth={1.400} /></RailIcon>
              <RailLabel>设置</RailLabel>
            </RailTab>
          </TabRail>
        </Workspace>
      </Column>
    </Body>

    <RedBox $l={457} $t={547} $w={99} $h={53} />
    <RedBox $l={1460} $t={279} $w={198} $h={220} />
    <RedBox $l={1677} $t={259} $w={164} $h={172} />
    <Annotation>
      {NOTE_FIRST}
      <br />
      {NOTE_SECOND}
    </Annotation>
    <Watermark>
      CSDN @大强哥666
      <svg width="24" height="22" viewBox="0 0 24 22" fill="none" stroke="rgba(110,110,110,.62)" strokeWidth="1.500"><path d="M12 2l9 5-9 5-9-5zM3 11l9 5 9-5M3 15l9 5 9-5" /></svg>
    </Watermark>
  </Page>
);

export default App;
